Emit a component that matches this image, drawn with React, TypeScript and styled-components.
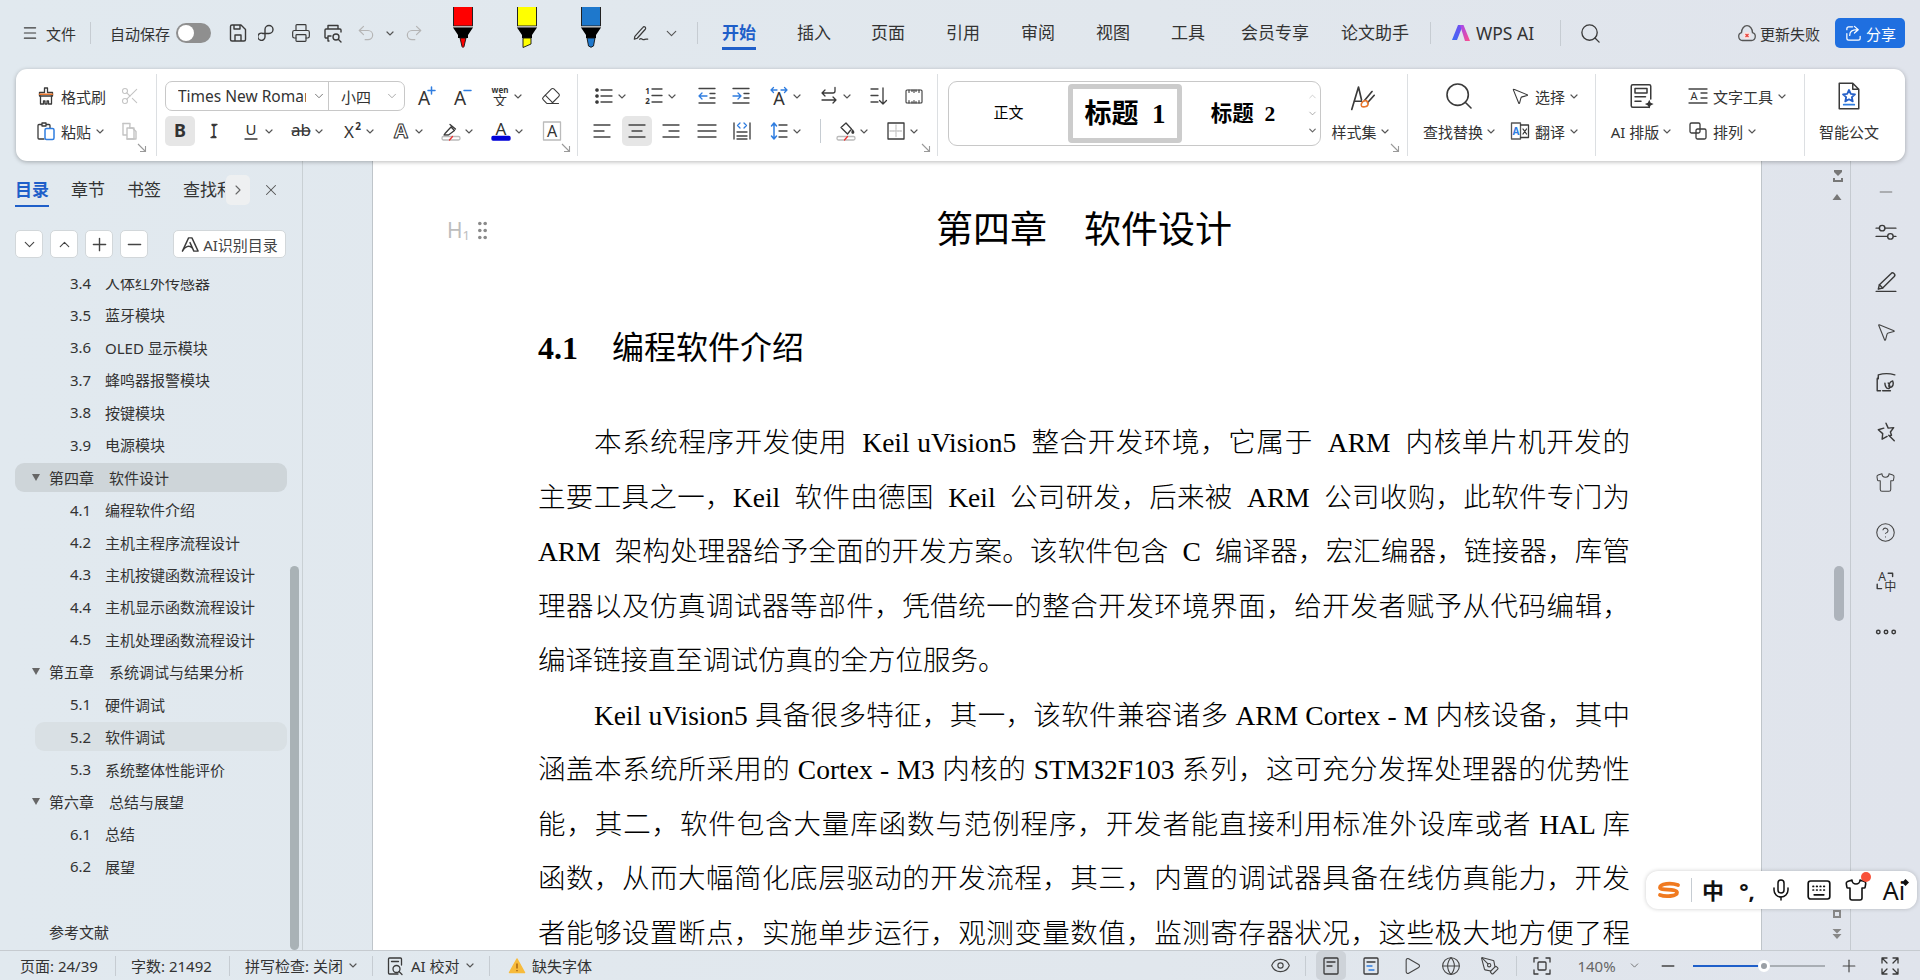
import React from 'react';
import styled, { createGlobalStyle } from 'styled-components';
import {
	Scissors, Search, X, Plus, Minus, ChevronDown, ChevronUp, ChevronRight, Eye, Play, Globe,
	Printer, Undo2, Redo2, CircleHelp, Shirt, MousePointer2, Mic, PenTool, Eraser,
} from 'lucide-react';

const SANS = `"Noto Sans", "Noto Sans CJK SC", sans-serif`;
const SERIF = `"Liberation Serif", "Noto Sans CJK SC", serif`;
const BLUE = '#1f5fc9';
const INK = '#333';

const GlobalStyle = createGlobalStyle`
	html, body { margin: 0; padding: 0; height: 100%; overflow: hidden; }
	body { font-family: ${SANS}; color: ${INK}; }
	#root { height: 100%; }
`;

const Shell = styled.div`
	position: relative;
	width: 1920px;
	height: 980px;
	display: flex;
	flex-direction: column;
	overflow: hidden;
	background: linear-gradient(90deg, #e1e9ef 0%, #e1e7ed 60%, #e0e4ec 100%);
`;

/* ---------- title bar ---------- */
const TitleBar = styled.div`
	height: 66px;
	padding-bottom: 3px;
	display: flex;
	align-items: center;
	font-size: 15px;
	flex-shrink: 0;
`;
const Slot = styled.div<{ $w: number }>`
	width: ${p => p.$w}px;
	flex-shrink: 0;
	display: flex;
	align-items: center;
	justify-content: center;
`;
const MenuButton = styled.div`
	display: flex;
	align-items: center;
	gap: 8px;
	padding-left: 22px;
	width: 90px;
	box-sizing: border-box;
	flex-shrink: 0;
`;
const VBar = styled.div<{ $h?: number; $ml?: number; $mr?: number }>`
	width: 1px;
	height: ${p => p.$h ?? 22}px;
	background: #c6ccd2;
	flex-shrink: 0;
	margin-left: ${p => p.$ml ?? 0}px;
	margin-right: ${p => p.$mr ?? 0}px;
`;
const AutoSave = styled.div`
	display: flex;
	align-items: center;
	gap: 6px;
	margin-left: 19px;
	width: 113px;
	flex-shrink: 0;
`;
const Toggle = styled.div`
	width: 35px;
	height: 20px;
	border-radius: 10px;
	background: #8f8f8f;
	position: relative;
	&::after {
		content: '';
		position: absolute;
		left: 2px;
		top: 2px;
		width: 16px;
		height: 16px;
		border-radius: 50%;
		background: #fff;
	}
`;
const PenSlot = styled(Slot)`
	margin-top: -11px;
`;
const Tab = styled.div<{ $w: number; $on?: boolean }>`
	position: relative;
	width: ${p => p.$w}px;
	flex-shrink: 0;
	font-size: 17px;
	line-height: 24px;
	color: ${p => (p.$on ? BLUE : INK)};
	font-weight: ${p => (p.$on ? 700 : 400)};
	&::after {
		content: '';
		display: ${p => (p.$on ? 'block' : 'none')};
		position: absolute;
		left: 0;
		top: 26px;
		width: 34px;
		height: 2.5px;
		background: ${BLUE};
	}
`;
const WpsAi = styled.div`
	display: flex;
	align-items: center;
	gap: 5px;
	margin-left: 20px;
	width: 109px;
	font-size: 17.5px;
	flex-shrink: 0;
`;
const Spacer = styled.div`
	flex: 1;
`;
const Failed = styled.div`
	display: flex;
	align-items: center;
	gap: 3px;
	margin-right: 15px;
`;
const Share = styled.div`
	width: 70px;
	height: 30px;
	margin-right: 15px;
	border-radius: 5px;
	background: #1f6fe0;
	color: #fff;
	display: flex;
	align-items: center;
	justify-content: center;
	gap: 3px;
`;

/* ---------- ribbon ---------- */
const Ribbon = styled.div`
	height: 92px;
	width: 1889px;
	margin-left: 16px;
	position: relative;
	z-index: 3;
	flex-shrink: 0;
	background: #fff;
	border-radius: 11px;
	box-shadow: 0 1px 4px rgba(0, 0, 0, 0.28);
	display: flex;
	align-items: center;
	font-size: 15px;
`;
const Group = styled.div<{ $w: number; $row?: boolean; $pad?: number; $plain?: boolean }>`
	position: relative;
	width: ${p => p.$w}px;
	height: 82px;
	box-sizing: border-box;
	flex-shrink: 0;
	padding-top: 7px;
	padding-left: ${p => p.$pad ?? 0}px;
	border-right: ${p => (p.$plain ? 'none' : '1px solid #dcdfe2')};
	display: flex;
	flex-direction: ${p => (p.$row ? 'row' : 'column')};
	gap: ${p => (p.$row ? 0 : 5)}px;
`;
const ToolRow = styled.div<{ $pad?: number }>`
	display: flex;
	align-items: center;
	height: 30px;
	padding-left: ${p => p.$pad ?? 0}px;
`;
const Tool = styled.div<{ $w?: number; $on?: boolean; $left?: boolean; $gap?: number }>`
	width: ${p => (p.$w ? `${p.$w}px` : 'auto')};
	height: 30px;
	flex-shrink: 0;
	display: flex;
	align-items: center;
	justify-content: ${p => (p.$left ? 'flex-start' : 'center')};
	gap: ${p => p.$gap ?? 4}px;
	border-radius: 5px;
	white-space: nowrap;
	background: ${p => (p.$on ? '#e6e6e6' : 'transparent')};
`;
const Corner = styled.div<{ $r: number }>`
	position: absolute;
	right: ${p => p.$r}px;
	bottom: 3px;
	line-height: 0;
`;
const Combo = styled.div`
	width: 240px;
	height: 30px;
	box-sizing: border-box;
	border: 1px solid #c8c8c8;
	border-radius: 7px;
	display: flex;
	flex-shrink: 0;
	align-items: center;
`;
const FontCell = styled.div`
	width: 163px;
	height: 100%;
	padding-left: 12px;
	box-sizing: border-box;
	border-right: 1px solid #c8c8c8;
	display: flex;
	align-items: center;
	gap: 6px;
`;
const FontName = styled.span`
	width: 128px;
	overflow: hidden;
	white-space: nowrap;
	font-size: 15.5px;
`;
const SizeCell = styled.div`
	flex: 1;
	padding-left: 12px;
	display: flex;
	align-items: center;
	gap: 14px;
`;
const Gallery = styled.div`
	width: 373px;
	height: 65px;
	box-sizing: border-box;
	border: 1px solid #c8c8c8;
	border-radius: 9px;
	display: flex;
	align-items: center;
	flex-shrink: 0;
`;
const StyleCell = styled.div<{ $w: number }>`
	width: ${p => p.$w}px;
	padding-bottom: 4px;
	text-align: center;
	flex-shrink: 0;
	color: #000;
`;
const StylePicked = styled.div`
	width: 114px;
	height: 59px;
	box-sizing: border-box;
	border: 5px solid #ccc;
	border-radius: 4px;
	padding-bottom: 4px;
	flex-shrink: 0;
	display: flex;
	align-items: center;
	justify-content: center;
	font: 700 27px ${SERIF};
	white-space: pre;
	color: #000;
`;
const StyleTwo = styled(StyleCell)`
	font: 700 21.5px ${SERIF};
	white-space: pre;
`;
const GalleryArrows = styled.div`
	flex: 1;
	height: 100%;
	display: flex;
	flex-direction: column;
	align-items: center;
	justify-content: space-around;
	padding: 6px 0;
	box-sizing: border-box;
`;
const Big = styled.div<{ $w: number }>`
	width: ${p => p.$w}px;
	flex-shrink: 0;
	display: flex;
	flex-direction: column;
	align-items: center;
	gap: 5px;
`;
const SideColumn = styled.div<{ $ml: number }>`
	margin-left: ${p => p.$ml}px;
	display: flex;
	flex-direction: column;
	gap: 5px;
`;

/* ---------- workspace ---------- */
const Workspace = styled.div`
	flex: 1;
	min-height: 0;
	display: flex;
`;
const Sidebar = styled.aside`
	position: relative;
	width: 303px;
	box-sizing: border-box;
	border-right: 1px solid #c9d0d4;
	flex-shrink: 0;
	display: flex;
	flex-direction: column;
	overflow: hidden;
`;
const SideTabs = styled.div`
	display: flex;
	align-items: flex-start;
	height: 46px;
	padding: 14px 0 0 15px;
	box-sizing: border-box;
	flex-shrink: 0;
`;
const SideTab = styled.div<{ $on?: boolean; $w?: number }>`
	position: relative;
	width: ${p => p.$w ?? 34}px;
	margin-right: 22px;
	font-size: 17px;
	line-height: 30px;
	white-space: nowrap;
	color: ${p => (p.$on ? BLUE : INK)};
	font-weight: ${p => (p.$on ? 700 : 400)};
	&::after {
		content: '';
		display: ${p => (p.$on ? 'block' : 'none')};
		position: absolute;
		left: 0;
		right: 0;
		top: 30px;
		height: 2px;
		background: ${BLUE};
	}
`;
const ClippedTab = styled(SideTab)`
	overflow: hidden;
	margin-right: 1px;
`;
const MoreTabs = styled.div`
	width: 24px;
	height: 30px;
	border-radius: 5px;
	background: #eef0f1;
	display: flex;
	align-items: center;
	justify-content: center;
	color: #666;
	margin-right: 12px;
`;
const CloseTab = styled.div`
	height: 30px;
	display: flex;
	align-items: center;
	color: #555;
`;
const SideTools = styled.div`
	display: flex;
	gap: 7px;
	padding: 23px 0 0 15px;
	height: 28px;
	flex-shrink: 0;
`;
const SquareButton = styled.div`
	width: 28px;
	height: 28px;
	box-sizing: border-box;
	border: 1px solid #d2d7da;
	border-radius: 5px;
	background: #fff;
	display: flex;
	align-items: center;
	justify-content: center;
	color: #444;
`;
const AiButton = styled(SquareButton)`
	width: 113px;
	margin-left: 18px;
	gap: 3px;
	font-size: 15px;
	white-space: nowrap;
`;
const Tree = styled.div`
	margin-top: 21px;
	flex: 1;
	min-height: 0;
	overflow: hidden;
	padding-left: 15px;
`;
const TreeInner = styled.div`
	margin-top: -11px;
`;
const TreeRow = styled.div<{ $sub?: boolean; $bg?: string }>`
	height: 29px;
	margin-bottom: 3.44px;
	width: ${p => (p.$sub ? 252 : 272)}px;
	margin-left: ${p => (p.$sub ? 20 : 0)}px;
	padding-left: ${p => (p.$sub ? 35 : 34)}px;
	box-sizing: border-box;
	display: flex;
	align-items: center;
	font-size: 15px;
	white-space: pre;
	border-radius: 9px;
	position: relative;
	background: ${p => p.$bg ?? 'transparent'};
`;
const TreeNum = styled.span`
	width: 35px;
	flex-shrink: 0;
`;
const TreeArrow = styled.span`
	position: absolute;
	left: 17px;
	top: 11px;
	width: 0;
	height: 0;
	border-left: 4.5px solid transparent;
	border-right: 4.5px solid transparent;
	border-top: 7px solid #666;
`;
const ChapterPart = styled.span`
	width: 60px;
	flex-shrink: 0;
`;
const SideThumb = styled.div`
	position: absolute;
	left: 290px;
	top: 405px;
	bottom: 0;
	width: 9px;
	border-radius: 5px;
	background: #a9b2b6;
`;
const Gap = styled.div`
	width: 69px;
	flex-shrink: 0;
`;
const Page = styled.main`
	position: relative;
	width: 1390px;
	box-sizing: border-box;
	flex-shrink: 0;
	padding: 0 131px 0 165px;
	background: #fff;
	border-left: 1px solid #bfc5ca;
	border-right: 1px solid #bfc5ca;
	overflow: hidden;
	font-family: ${SERIF};
	font-weight: 300;
	color: #000;
`;
const Handle = styled.div`
	position: absolute;
	left: 74px;
	top: 58px;
	display: flex;
	align-items: center;
	gap: 8px;
	color: #bdbdbd;
	font: 21px ${SANS};
	line-height: 22px;
	sub {
		font-size: 13px;
		vertical-align: -2px;
		line-height: 0;
	}
`;
const DocTitle = styled.h1`
	margin: 47px 0 0;
	font-size: 37px;
	line-height: 46px;
	font-weight: 400;
	text-align: center;
	white-space: pre;
`;
const DocHeading = styled.h2`
	margin: 74px 0 48px;
	font-size: 32px;
	line-height: 40px;
	font-weight: 400;
	display: flex;
	gap: 34px;
	b {
		font-weight: 700;
	}
`;
const DocLine = styled.div<{ $first?: boolean; $end?: boolean }>`
	height: 54.5px;
	line-height: 54.5px;
	font-size: 27.5px;
	text-indent: ${p => (p.$first ? 56 : 0)}px;
	text-align: ${p => (p.$end ? 'left' : 'justify')};
	text-align-last: ${p => (p.$end ? 'left' : 'justify')};
	text-justify: inter-character;
`;
const Gutter = styled.div`
	position: relative;
	width: 88px;
	flex-shrink: 0;
	border-right: 1px solid #c5cad0;
`;
const GutterMark = styled.div<{ $top: number }>`
	position: absolute;
	left: 70px;
	top: ${p => p.$top}px;
	line-height: 0;
`;
const DocThumb = styled.div`
	position: absolute;
	left: 72px;
	top: 405px;
	width: 10px;
	height: 55px;
	border-radius: 5px;
	background: #adb3bb;
`;
const Rail = styled.div`
	flex: 1;
	padding-top: 16px;
	display: flex;
	flex-direction: column;
	align-items: center;
`;
const RailItem = styled.div`
	height: 50px;
	display: flex;
	align-items: center;
	justify-content: center;
	color: #444;
	&:first-child {
		height: 30px;
	}
`;

/* ---------- status bar ---------- */
const StatusBar = styled.footer`
	height: 30px;
	box-sizing: border-box;
	flex-shrink: 0;
	border-top: 1px solid #c6cbd0;
	display: flex;
	align-items: center;
	font-size: 15px;
	padding: 0 13px 0 20px;
	white-space: nowrap;
`;
const Seg = styled.div<{ $w: number; $pad?: number }>`
	width: ${p => p.$w}px;
	padding-left: ${p => p.$pad ?? 0}px;
	box-sizing: border-box;
	display: flex;
	align-items: center;
	gap: 6px;
	flex-shrink: 0;
`;
const StatusButton = styled.div<{ $w: number; $on?: boolean; $ml?: number }>`
	width: ${p => p.$w}px;
	height: 29px;
	margin-left: ${p => p.$ml ?? 0}px;
	flex-shrink: 0;
	display: flex;
	align-items: center;
	justify-content: center;
	border-radius: 5px;
	color: #444;
	background: ${p => (p.$on ? '#ced3d9' : 'transparent')};
`;
const Percent = styled(StatusButton)`
	color: #666;
	font-size: 15px;
`;
const Slider = styled.div`
	position: relative;
	width: 132px;
	margin-left: 9px;
	height: 2px;
	background: #a9aeb4;
	flex-shrink: 0;
`;
const SliderFill = styled.div<{ $value: number }>`
	width: ${p => p.$value}%;
	height: 100%;
	background: ${BLUE};
`;
const SliderThumb = styled.div<{ $value: number }>`
	position: absolute;
	left: ${p => p.$value}%;
	top: -5px;
	margin-left: -6px;
	width: 12px;
	height: 12px;
	box-sizing: border-box;
	border-radius: 50%;
	background: #9a9fa5;
	border: 3px solid #fff;
`;

/* ---------- input method float ---------- */
const ImeBar = styled.div`
	position: absolute;
	right: 3px;
	top: 871px;
	width: 271px;
	height: 38px;
	box-sizing: border-box;
	z-index: 4;
	border-radius: 12px;
	background: #fff;
	box-shadow: 0 0 4px rgba(0, 0, 0, 0.2);
	display: flex;
	align-items: center;
	padding-left: 10px;
	color: #111;
`;
const ImeCell = styled.div<{ $w: number }>`
	position: relative;
	width: ${p => p.$w}px;
	flex-shrink: 0;
	display: flex;
	align-items: center;
	justify-content: center;
	font-size: 22px;
	font-weight: 700;
	line-height: 24px;
`;
const ImeDot = styled.span`
	position: absolute;
	right: 4px;
	top: -6px;
	width: 10px;
	height: 10px;
	border-radius: 50%;
	background: #f8513a;
`;
const AiMark = styled.span`
	font-size: 25px;
	font-weight: 400;
	position: relative;
	&::after {
		content: '';
		position: absolute;
		right: -3px;
		top: 2px;
		width: 5px;
		height: 5px;
		background: #111;
		transform: rotate(45deg);
	}
`;

/* ---------- drawings ---------- */
const Ico: React.FC<{ s?: number; c?: string; w?: number; children: React.ReactNode }> = ({ s = 20, c = '#3a3a3a', w = 1.3, children }) => (
	<svg width={s} height={s} viewBox="0 0 20 20" fill="none" stroke={c} strokeWidth={w} strokeLinecap="round" strokeLinejoin="round">
		{children}
	</svg>
);
const Letter: React.FC<{ x?: number; y?: number; size?: number; fill?: string; children: React.ReactNode; weight?: number }> = ({ x = 10, y = 16, size = 19, fill = '#333', weight = 400, children }) => (
	<text x={x} y={y} fontSize={size} fontWeight={weight} fontFamily={SANS} fill={fill} stroke="none" textAnchor="middle">
		{children}
	</text>
);
const Caret = () => (
	<svg width="8" height="5" viewBox="0 0 8 5" fill="none" stroke="#555" strokeWidth="1.2" strokeLinecap="round">
		<path d="M1 1l3 3 3-3" />
	</svg>
);
const CornerArrow = () => (
	<svg width="10" height="10" viewBox="0 0 10 10" fill="none" stroke="#9a9a9a" strokeWidth="1.1">
		<path d="M1 1l7 7M3 8.5h5.5V3" />
	</svg>
);
const Lines: React.FC<{ rows: number[][]; c?: string }> = ({ rows, c = '#444' }) => (
	<>
		{rows.map(([a, b, y]) => (
			<path key={`${a}-${y}`} d={`M${a} ${y}H${b}`} stroke={c} />
		))}
	</>
);

const Menu = () => <Ico s={16} w={1.5}><path d="M3 3.5h14M3 10h14M3 16.5h14" /></Ico>;
const Save = () => <Ico w={1.4}><path d="M2.5 3.5a1.5 1.5 0 0 1 1.5-1.5h9l4.5 4.5V16.5a1.5 1.5 0 0 1-1.5 1.5H4a1.5 1.5 0 0 1-1.5-1.5zM6 2v4h6V2M7 18v-6h6v6" /></Ico>;
const PLink = () => <Ico w={1.4}><path d="M7 14V6.5a4 4 0 1 1 4 4H5a3.6 3.6 0 1 0 2 3.5" /></Ico>;
const PreviewPrint = () => <Ico w={1.4}><path d="M5 6V2.5h10V6M4 15H3a1 1 0 0 1-1-1V7a1 1 0 0 1 1-1h14a1 1 0 0 1 1 1v2M6 18H5v-5h3" /><circle cx="13" cy="14" r="3" /><path d="M15.5 16.5L18 19" /></Ico>;
const Pen: React.FC<{ color: string; tip: string }> = ({ color, tip }) => (
	<svg width="20" height="41" viewBox="0 0 20 41">
		<path d="M.5 0V19H19.5V0" fill={color} stroke="#222" />
		<rect y="19" width="20" height="1.6" fill="#b5b5b5" />
		<path d="M0 20.6H20L15 28V31H5V28Z" fill="#000" />
		<path d={tip} fill={color} stroke="#111" strokeWidth=".9" />
	</svg>
);
const Signature = () => <Ico s={19}><path d="M3 13l8.5-9.5a1.6 1.6 0 0 1 2.5 2L5.5 15l-3 1zM8 16c2-2 3 1 4.5.5s1.5-1 4-.5" /></Ico>;
const WpsLogo = () => (
	<svg width="20" height="18" viewBox="0 0 20 18">
		<defs>
			<linearGradient id="wpsa" x1="0" y1="1" x2="1" y2="0"><stop offset="0" stopColor="#3a6cf5" /><stop offset="1" stopColor="#7a4cf0" /></linearGradient>
			<linearGradient id="wpsb" x1="0" y1="0" x2="1" y2="1"><stop offset="0" stopColor="#a04af0" /><stop offset="1" stopColor="#ff4f8b" /></linearGradient>
		</defs>
		<path d="M7 1h5L6 16H1z" fill="url(#wpsa)" />
		<path d="M9 1h3.5L19 17h-5z" fill="url(#wpsb)" />
	</svg>
);
const CloudFail = () => (
	<svg width="20" height="20" viewBox="0 0 20 20" fill="none">
		<path d="M5.5 17.5a4 4 0 0 1-1-7.800 5.500 7 0 0 1 11 0 4 4 0 0 1-1 7.800z" stroke="#555" strokeWidth="1.3" />
		<circle cx="10" cy="12.500" r="3.600" fill="#fbe3e1" />
		<path d="M8.500 11l3 3M11.500 11l-3 3" stroke="#e8423c" strokeWidth="1.300" />
	</svg>
);
const ShareGlyph = () => <Ico s={19} c="#fff"><path d="M9 3H5a2 2 0 0 0-2 2v1M3 10v5a2 2 0 0 0 2 2h10a2 2 0 0 0 2-2v-2M6 12c0-4 3-6 8-6M11 2.5L15 6l-4 3.5" /></Ico>;

const Brush = () => (
	<Ico>
		<path d="M8.5 2h3v4.5h5V10H3.5V6.5h5z" />
		<path d="M3.5 8.3h13" stroke="#e8752c" strokeWidth="1.6" />
		<path d="M4.5 10v8h3v-3h1.5v3h2v-3h1.5v3h3v-8" />
	</Ico>
);
const Paste = () => (
	<Ico>
		<path d="M6 3.5H3a1 1 0 0 0-1 1V17a1 1 0 0 0 1 1h5M14 7V4.5a1 1 0 0 0-1-1h-3M6 2h4v3H6z" />
		<rect x="9" y="7.5" width="9" height="11" rx="1.5" stroke="#2f7de0" strokeWidth="1.5" />
	</Ico>
);
const CopyGray = () => (
	<Ico c="#c4c4c4" w={1.4}>
		<path d="M3 2.5h7l-.2 4.5H14V18H7" />
		<path d="M3 2.5V14h4M7 7h5.5l3.5 3.5V18H7z" />
	</Ico>
);
const BulletList = () => <Ico><circle cx="3" cy="4" r="1.2" fill="#333" /><circle cx="3" cy="10" r="1.2" fill="#333" /><circle cx="3" cy="16" r="1.2" fill="#333" /><Lines rows={[[7, 18, 4], [7, 18, 10], [7, 18, 16]]} /></Ico>;
const NumberList = () => <Ico><Letter x={3.5} y={7.5} size={8} weight={700}>1</Letter><Letter x={3.5} y={18} size={8} weight={700}>2</Letter><Lines rows={[[8, 18, 3], [8, 18, 9.5], [8, 18, 16]]} /></Ico>;
const Outdent = () => <Ico><Lines rows={[[2, 18, 2.5], [2, 18, 17]]} /><Lines rows={[[13, 18, 7.5], [13, 18, 12]]} /><path d="M10 10H2M5 7L2 10l3 3" stroke="#2f7de0" /></Ico>;
const Indent = () => <Ico><Lines rows={[[2, 18, 2.5], [2, 18, 17]]} /><Lines rows={[[13, 18, 7.5], [13, 18, 12]]} /><path d="M2 10h8M7 7l3 3-3 3" stroke="#2f7de0" /></Ico>;
const SpreadA = () => <Ico><Letter y={19} size={18}>A</Letter><path d="M2 4h6M4.5 1.5L2 4l2.5 2.5M12 4h6M15.5 1.5L18 4l-2.5 2.5" stroke="#2f7de0" /></Ico>;
const Wrap = () => <Ico><path d="M16 1.5V5a2 2 0 0 1-2 2H3M6 4L3 7l3 3M3 14h14M14 11l3 3-3 3" /></Ico>;
const SortDown = () => <Ico><Lines rows={[[2, 9, 3], [2, 9, 9.5], [2, 9, 16]]} /><path d="M14 2v16M10.5 14.5L14 18l3.5-3.5" /></Ico>;
const Ruler = () => <Ico w={1.1}><rect x="2" y="4" width="16" height="13" rx="1" /><path d="M5 4v2.500M8 4v1.500M10 4v2.500M12 4v1.500M15 4v2.500M5 17v-2.500M8 17v-1.500M10 17v-2.500M12 17v-1.500M15 17v-2.500" /></Ico>;
const AlignLeft = () => <Ico><Lines rows={[[2, 18, 4], [2, 12, 10], [2, 18, 16]]} /></Ico>;
const AlignCenter = () => <Ico><Lines rows={[[2, 18, 4], [5, 15, 10], [2, 18, 16]]} /></Ico>;
const AlignRight = () => <Ico><Lines rows={[[2, 18, 4], [8, 18, 10], [2, 18, 16]]} /></Ico>;
const AlignJustify = () => <Ico><Lines rows={[[1, 19, 4], [1, 19, 10], [1, 19, 16]]} /></Ico>;
const Distribute = () => <Ico><path d="M2 2v16M18 2v16" /><Lines rows={[[5, 15, 11], [5, 15, 15], [5, 15, 18]]} /><path d="M8 2L5.5 4.5 8 7M12 2l2.5 2.5L12 7" stroke="#2f7de0" /></Ico>;
const LineSpacing = () => <Ico><path d="M5 2v16M2.5 5L5 2l2.5 3M2.5 15L5 18l2.5-3" stroke="#2f7de0" strokeWidth="1.5" /><Lines rows={[[10, 18, 4], [10, 18, 10], [10, 18, 16]]} /></Ico>;
const FillBucket = () => <Ico><path d="M5 6.5L10 2l5.5 6-4 5z" /><path d="M16.5 9c1 1.3 1.5 2 1 2.8s-1.5.2-1.5-.6z" fill="#333" /><rect x="1" y="15.5" width="18" height="3.5" rx="1.5" stroke="#bbb" /><path d="M8.5 19l3-3.5" stroke="#e33" /></Ico>;
const Borders = () => <Ico><rect x="2" y="2" width="16" height="16" /><path d="M10 4v12M4 10h12" stroke="#c8c8c8" strokeDasharray="1.5 1" /></Ico>;
const Highlighter = () => <Ico><path d="M4 12.5L10 6l3.5 3.5L7.5 14H3zM9 3.5l5.5 4.5M2 13.5" /><rect x="1" y="15.5" width="18" height="3.5" rx="1.5" stroke="#bbb" /><path d="M8.5 19l3-3.5" stroke="#e33" /></Ico>;
const StyleSet = () => <Ico s={30} w={1.1}><path d="M4.500 19L9 4l2 8.500M6 13.500h5" /><path d="M13 13l5-6M15 14.500l4.500-5" /><path d="M11 15c1-2 3-2.500 4-1.200s.3 3.200-1.700 3.400-3-.3-2.300-2.200z" stroke="#e8752c" /></Ico>;
const Translate = () => <Ico><rect x="1.5" y="2" width="9" height="16" stroke="#555" /><path d="M10.5 4h8v12.5h-8M13 8l3.5 5M16.5 8L13 13" /><Letter x={6} y={14} size={10} fill="#2f7de0" weight={700}>A</Letter></Ico>;
const AiDoc = () => <Ico s={30} w={1}><path d="M15.5 17.5H4.5a1 1 0 0 1-1-1v-13a1 1 0 0 1 1-1h11a1 1 0 0 1 1 1v8.5" /><rect x="6" y="5" width="8" height="3" /><path d="M6 10.5h7M6 13.5h4" /><path d="M15.5 12.5l.9 2 2 .9-2 .9-.9 2-.9-2-2-.9 2-.9z" fill="#333" stroke="none" /></Ico>;
const TextTool = () => <Ico><Lines rows={[[1, 19, 3], [1, 19, 17]]} /><Letter x={6} y={14} size={11}>A</Letter><Lines rows={[[13, 19, 7], [13, 19, 12]]} /></Ico>;
const Arrange = () => <Ico><rect x="2" y="2" width="10" height="10" rx="1.5" /><rect x="8" y="8" width="10" height="10" rx="1.5" /></Ico>;
const SmartDoc = () => (
	<Ico s={30} w={1}>
		<path d="M3.5 1.5h9l4 4v13h-13zM12.5 1.5v4h4" />
		<path d="M10 6l1.2 2.6 2.8.3-2.1 1.9.6 2.8L10 12.2 7.5 13.600l.6-2.800-2.100-1.900 2.800-.300z" fill="#fff" stroke="#2560c8" strokeWidth="1.2" />
		<path d="M6.500 15.800h7" stroke="#2f7de0" strokeWidth="1.200" />
	</Ico>
);
const AiOutline = () => <Ico s={19} w={1.5}><path d="M1.500 17L8 3h3.500L18 17h-4.500L9.500 8M1.500 17c2.500-5 7-6.500 10-3.500" /></Ico>;
const DragDots = () => (
	<svg width="9" height="19" viewBox="0 0 9 19" fill="#8a8a8a">
		{[2.5, 9.5, 16.5].flatMap(y => [1.800, 7.200].map(x => <circle key={`${x}-${y}`} cx={x} cy={y} r="1.800" />))}
	</svg>
);
const Knobs = () => <Ico s={22}><path d="M1 6.500h18M1 14h18" /><circle cx="6.500" cy="6.500" r="2.500" fill="#e0e4ec" /><circle cx="14" cy="14" r="2.500" fill="#e0e4ec" /></Ico>;
const Marker = () => <Ico s={22}><path d="M1 18.500h18M3 16.500l1-4L14.500 2.500a1.800 1.800 0 0 1 3 2.500L7 15.500z" /><path d="M4 12.500l3 3" /></Ico>;
const ImageLeaf = () => <Ico s={22}><path d="M3 7V3.500c5-1.500 10-1.500 15 0M3 6a1 1 0 0 0-1 1v11h3M14 18H7" /><path d="M9 11c0 2 1 5 3 5s2-3 0-5M13 15c-1-2 0-5 3-6 1 2 1 6-3 6z" /></Ico>;
const StarArrow = () => <Ico s={22}><path d="M10 2l2 4.500 5-.500-3 4 1 3-1.500.300M11 14l-4.500 2.500.5-5L3 8l5-1.500" /><path d="M12.500 13l5 5" /></Ico>;
const TranslateRail = () => <Ico s={22}><Letter x={6.500} y={9.500} size={11}>A</Letter><path d="M12 2h4v3M2 12v4h4" /><Letter x={14} y={18.500} size={11}>中</Letter></Ico>;
const Dots3 = () => <Ico s={22}><circle cx="3" cy="10" r="1.600" /><circle cx="10" cy="10" r="1.600" /><circle cx="17" cy="10" r="1.600" /></Ico>;
const TriUp = () => <svg width="10" height="8" viewBox="0 0 10 8" fill="#777"><path d="M5 1l4.500 6H.5z" /></svg>;
const TopMark = () => <svg width="12" height="12" viewBox="0 0 12 12" fill="#777"><path d="M2 0h8v2L6 6 2 2z" /><path d="M1 8h2v2h6V8h2v4H1z" /></svg>;
const SquareMark = () => <svg width="10" height="10" viewBox="0 0 10 10" fill="none" stroke="#888" strokeWidth="2"><rect x="2" y="2" width="6" height="6" /></svg>;
const DownDouble = () => <svg width="10" height="10" viewBox="0 0 10 10" fill="#888"><path d="M.5 0h9L5 4.500zM.5 5h9L5 10z" /></svg>;
const Sogou = () => (
	<svg width="28" height="20" viewBox="0 0 26 18" fill="none" stroke="#f07a20" strokeWidth="3.800" strokeLinecap="round">
		<path d="M22 4C15 1.500 4 2.500 4 6.500 4 10 21 7 21 11.500 21 15.500 9 16 4 14" />
	</svg>
);
const Keyboard = () => <Ico s={24} c="#111" w={1.4}><rect x="1" y="2.500" width="18" height="15" rx="2" /><path d="M5 7h.5M8 7h.5M11 7h.5M14 7h.5M5 10h.5M8 10h.5M11 10h.5M14 10h.5M6 14h8" /></Ico>;
const PageView = () => <Ico><rect x="3" y="2" width="14" height="16" rx="1" /><path d="M6 6h8M6 10h5" /></Ico>;
const OutlineView = () => <Ico><rect x="3" y="2" width="14" height="16" rx="1" /><path d="M6 6h8" /><path d="M6 10h5M8 14h5" stroke="#2f7de0" /></Ico>;
const FitPage = () => <Ico><path d="M2 6V2h4M14 2h4v4M18 14v4h-4M6 18H2v-4" /><rect x="6" y="6" width="8" height="8" rx="1" /></Ico>;
const Fullscreen = () => <Ico><path d="M2 7V2h5M13 2h5v5M18 13v5h-5M7 18H2v-5M2 2l5 5M18 2l-5 5M18 18l-5-5M2 18l5-5" /></Ico>;
const AiCheck = () => <Ico><path d="M13 18H4.500a1 1 0 0 1-1-1V3a1 1 0 0 1 1-1h11a1 1 0 0 1 1 1v6M6.500 5.500h7" /><circle cx="11.500" cy="13" r="3.500" /><path d="M14 15.500l3 3" /></Ico>;
const Warn = () => (
	<svg width="18" height="18" viewBox="0 0 18 18">
		<path d="M9 2l7.500 13.500h-15z" fill="#f7bb3c" stroke="#f7bb3c" strokeWidth="1.500" strokeLinejoin="round" />
		<path d="M9 6.500v5M9 13v1.200" stroke="#a5600c" strokeWidth="1.400" />
	</svg>
);

const IconA: React.FC<{ mark: 'plus' | 'minus' }> = ({ mark }) => (
	<Ico>
		<Letter x={8} y={19} size={19}>A</Letter>
		{mark === 'plus' ? <path d="M12 4.500h7M15.500 1v7" stroke="#2f7de0" strokeWidth="1.500" /> : <path d="M12 4.500h7" stroke="#2f7de0" strokeWidth="1.500" />}
	</Ico>
);
const WenGlyph = () => (
	<Ico>
		<Letter y={6.500} size={8} weight={700}>wen</Letter>
		<Letter y={19.500} size={14}>文</Letter>
	</Ico>
);
const ColorA = () => (
	<Ico>
		<Letter y={14} size={17}>A</Letter>
		<rect x="1" y="15.500" width="18" height="3.500" rx="1" fill="#0000d8" stroke="#0000d8" />
	</Ico>
);
const BoxedA = () => (
	<Ico c="#bbb">
		<rect x="1.500" y="1" width="17" height="18" />
		<Letter y={16} size={16}>A</Letter>
	</Ico>
);
const OutlineA = () => (
	<Ico>
		<text x="10" y="17" fontSize="20" fontWeight="700" fontFamily={SANS} fill="#fff" stroke="#333" strokeWidth="1" textAnchor="middle">A</text>
	</Ico>
);

/* ---------- data ---------- */
const tabs = [
	{ t: '开始', w: 75, on: true }, { t: '插入', w: 74 }, { t: '页面', w: 75 }, { t: '引用', w: 75 }, { t: '审阅', w: 75 },
	{ t: '视图', w: 75 }, { t: '工具', w: 70 }, { t: '会员专享', w: 100 }, { t: '论文助手', w: 89 },
];

type TocRow = { num?: string; title: string; ch?: string; open?: boolean; bg?: string };
const toc: TocRow[] = [
	{ num: '3.4', title: '人体红外传感器' },
	{ num: '3.5', title: '蓝牙模块' },
	{ num: '3.6', title: 'OLED 显示模块' },
	{ num: '3.7', title: '蜂鸣器报警模块' },
	{ num: '3.8', title: '按键模块' },
	{ num: '3.9', title: '电源模块' },
	{ ch: '第四章', title: '软件设计', open: true, bg: '#ced5d9' },
	{ num: '4.1', title: '编程软件介绍' },
	{ num: '4.2', title: '主机主程序流程设计' },
	{ num: '4.3', title: '主机按键函数流程设计' },
	{ num: '4.4', title: '主机显示函数流程设计' },
	{ num: '4.5', title: '主机处理函数流程设计' },
	{ ch: '第五章', title: '系统调试与结果分析', open: true },
	{ num: '5.1', title: '硬件调试' },
	{ num: '5.2', title: '软件调试', bg: '#d9e0e4' },
	{ num: '5.3', title: '系统整体性能评价' },
	{ ch: '第六章', title: '总结与展望', open: true },
	{ num: '6.1', title: '总结' },
	{ num: '6.2', title: '展望' },
	{ title: '' },
	{ ch: '参考文献', title: '' },
];

// the wider gaps around latin words in the first paragraph are two spaces in the document
const paragraphs = [
	[
		'本系统程序开发使用\u00a0 Keil uVision5\u00a0 整合开发环境，它属于\u00a0 ARM\u00a0 内核单片机开发的',
		'主要工具之一，Keil\u00a0 软件由德国\u00a0 Keil\u00a0 公司研发，后来被\u00a0 ARM\u00a0 公司收购，此软件专门为',
		'ARM\u00a0 架构处理器给予全面的开发方案。该软件包含\u00a0 C\u00a0 编译器，宏汇编器，链接器，库管',
		'理器以及仿真调试器等部件，凭借统一的整合开发环境界面，给开发者赋予从代码编辑，',
		'编译链接直至调试仿真的全方位服务。',
	],
	[
		'Keil uVision5 具备很多特征，其一，该软件兼容诸多 ARM Cortex - M 内核设备，其中',
		'涵盖本系统所采用的 Cortex - M3 内核的 STM32F103 系列，这可充分发挥处理器的优势性',
		'能，其二，软件包含大量库函数与范例程序，开发者能直接利用标准外设库或者 HAL 库',
		'函数，从而大幅简化底层驱动的开发流程，其三，内置的调试器具备在线仿真能力，开发',
		'者能够设置断点，实施单步运行，观测变量数值，监测寄存器状况，这些极大地方便了程',
	],
];

export default function App() {
	return (
		<Shell lang="zh-CN">
			<GlobalStyle />
			<TitleBar>
				<MenuButton><Menu />文件</MenuButton>
				<VBar />
				<AutoSave>自动保存<Toggle /></AutoSave>
				<Slot $w={29}><Save /></Slot>
				<Slot $w={32}><PLink /></Slot>
				<Slot $w={33}><Printer size={20} strokeWidth={1.4} color="#3a3a3a" /></Slot>
				<Slot $w={32}><PreviewPrint /></Slot>
				<Slot $w={34}><Undo2 size={20} strokeWidth={1.4} color="#b5b5b5" /></Slot>
				<Slot $w={14}><Caret /></Slot>
				<Slot $w={34}><Redo2 size={20} strokeWidth={1.4} color="#b5b5b5" /></Slot>
				<PenSlot $w={64}><Pen color="#ff0000" tip="M7 31H13L11 39.500Q10 41.500 9 39.500Z" /></PenSlot>
				<PenSlot $w={64}><Pen color="#ffff00" tip="M6 31H14V37L6 40.500Z" /></PenSlot>
				<PenSlot $w={64}><Pen color="#1e78cc" tip="M6 31H14L12.500 39Q10 41.500 7.500 39Z" /></PenSlot>
				<Slot $w={36}><Signature /></Slot>
				<Slot $w={24}><ChevronDown size={17} strokeWidth={1.6} color="#555" /></Slot>
				<Slot $w={14} />
				<VBar $mr={24} />
				{tabs.map(tab => (
					<Tab key={tab.t} $w={tab.w} $on={tab.on}>{tab.t}</Tab>
				))}
				<VBar />
				<WpsAi><WpsLogo />WPS AI</WpsAi>
				<VBar $h={26} />
				<Slot $w={58}><Search size={23} strokeWidth={1.4} color="#3a3a3a" /></Slot>
				<Spacer />
				<Failed><CloudFail />更新失败</Failed>
				<Share><ShareGlyph />分享</Share>
			</TitleBar>

			<Ribbon>
				<Group $w={141}>
					<ToolRow $pad={20}>
						<Tool $w={80} $left $gap={5}><Brush />格式刷</Tool>
						<Tool $w={28}><Scissors size={20} strokeWidth={1.3} color="#c4c4c4" /></Tool>
					</ToolRow>
					<ToolRow $pad={20}>
						<Tool $w={80} $left $gap={5}><Paste />粘贴<Caret /></Tool>
						<Tool $w={28}><CopyGray /></Tool>
					</ToolRow>
					<Corner $r={9}><CornerArrow /></Corner>
				</Group>

				<Group $w={421}>
					<ToolRow $pad={8}>
						<Combo>
							<FontCell><FontName>Times New Roman</FontName><ChevronDown size={14} strokeWidth={1.5} color="#666" /></FontCell>
							<SizeCell>小四<ChevronDown size={14} strokeWidth={1.2} color="#888" /></SizeCell>
						</Combo>
						<Tool $w={42}><IconA mark="plus" /></Tool>
						<Tool $w={30}><IconA mark="minus" /></Tool>
						<Tool $w={58}><WenGlyph /><Caret /></Tool>
						<Tool $w={32}><Eraser size={20} strokeWidth={1.3} color="#3a3a3a" /></Tool>
					</ToolRow>
					<ToolRow $pad={8}>
						<Tool $w={30} $on><Ico><Letter y={16} size={18} weight={700}>B</Letter></Ico></Tool>
						<Tool $w={38}><Ico><Letter y={16} size={17}>I</Letter><path d="M8 3.500h5M7 16.500h5" /></Ico></Tool>
						<Tool $w={48}><Ico><Letter y={14} size={15}>U</Letter><path d="M4 18h12" /></Ico><Caret /></Tool>
						<Tool $w={52}><Ico><Letter y={15} size={17}>ab</Letter><path d="M1 10h18" /></Ico><Caret /></Tool>
						<Tool $w={50}><Ico><Letter x={7} y={17} size={17}>X</Letter><Letter x={16} y={9} size={10} weight={700}>2</Letter></Ico><Caret /></Tool>
						<Tool $w={48}><OutlineA /><Caret /></Tool>
						<Tool $w={52}><Highlighter /><Caret /></Tool>
						<Tool $w={48}><ColorA /><Caret /></Tool>
						<Tool $w={42}><BoxedA /></Tool>
					</ToolRow>
					<Corner $r={6}><CornerArrow /></Corner>
				</Group>

				<Group $w={360}>
					<ToolRow $pad={12}>
						<Tool $w={40}><BulletList /><Caret /></Tool>
						<Tool $w={60}><NumberList /><Caret /></Tool>
						<Tool $w={34}><Outdent /></Tool>
						<Tool $w={34}><Indent /></Tool>
						<Tool $w={54}><SpreadA /><Caret /></Tool>
						<Tool $w={46}><Wrap /><Caret /></Tool>
						<Tool $w={42}><SortDown /></Tool>
						<Tool $w={28}><Ruler /></Tool>
					</ToolRow>
					<ToolRow $pad={9}>
						<Tool $w={30}><AlignLeft /></Tool>
						<Tool $w={5} />
						<Tool $w={30} $on><AlignCenter /></Tool>
						<Tool $w={38}><AlignRight /></Tool>
						<Tool $w={34}><AlignJustify /></Tool>
						<Tool $w={36}><Distribute /></Tool>
						<Tool $w={50}><LineSpacing /><Caret /></Tool>
						<VBar $h={24} $ml={10} />
						<Tool $w={62}><FillBucket /><Caret /></Tool>
						<Tool $w={38}><Borders /><Caret /></Tool>
					</ToolRow>
					<Corner $r={6}><CornerArrow /></Corner>
				</Group>

				<Group $w={470} $row $pad={10}>
					<Gallery>
						<StyleCell $w={119}>正文</StyleCell>
						<StylePicked>标题  1</StylePicked>
						<StyleTwo $w={122}>标题  2</StyleTwo>
						<GalleryArrows>
							<ChevronUp size={11} strokeWidth={1.5} color="#bbb" />
							<ChevronDown size={11} strokeWidth={1.5} color="#888" />
							<ChevronDown size={11} strokeWidth={2.5} color="#666" />
						</GalleryArrows>
					</Gallery>
					<Big $w={78}>
						<Tool><StyleSet /></Tool>
						<Tool>样式集<Caret /></Tool>
					</Big>
					<Corner $r={7}><CornerArrow /></Corner>
				</Group>

				<Group $w={188} $row $pad={13}>
					<Big $w={76}>
						<Tool><Search size={32} strokeWidth={1.2} color="#3a3a3a" /></Tool>
						<Tool>查找替换<Caret /></Tool>
					</Big>
					<SideColumn $ml={13}>
						<Tool $left $gap={5}><MousePointer2 size={20} strokeWidth={1.3} color="#3a3a3a" />选择<Caret /></Tool>
						<Tool $left $gap={5}><Translate />翻译<Caret /></Tool>
					</SideColumn>
				</Group>

				<Group $w={209} $row $pad={9}>
					<Big $w={72}>
						<Tool><AiDoc /></Tool>
						<Tool>AI 排版<Caret /></Tool>
					</Big>
					<SideColumn $ml={11}>
						<Tool $left $gap={5}><TextTool />文字工具<Caret /></Tool>
						<Tool $left $gap={5}><Arrange />排列<Caret /></Tool>
					</SideColumn>
				</Group>

				<Group $w={100} $row $plain>
					<Big $w={88}>
						<Tool><SmartDoc /></Tool>
						<Tool>智能公文</Tool>
					</Big>
				</Group>
			</Ribbon>

			<Workspace>
				<Sidebar>
					<SideTabs>
						<SideTab $on>目录</SideTab>
						<SideTab>章节</SideTab>
						<SideTab>书签</SideTab>
						<ClippedTab $w={42}>查找和替换</ClippedTab>
						<MoreTabs><ChevronRight size={16} strokeWidth={1.6} /></MoreTabs>
						<CloseTab><X size={18} strokeWidth={1.4} /></CloseTab>
					</SideTabs>
					<SideTools>
						<SquareButton><ChevronDown size={17} strokeWidth={1.6} /></SquareButton>
						<SquareButton><ChevronUp size={17} strokeWidth={1.6} /></SquareButton>
						<SquareButton><Plus size={21} strokeWidth={1.6} /></SquareButton>
						<SquareButton><Minus size={21} strokeWidth={1.6} /></SquareButton>
						<AiButton><AiOutline />AI识别目录</AiButton>
					</SideTools>
					<Tree>
						<TreeInner>
							{toc.map(row =>
								row.num ? (
									<TreeRow key={row.num} $sub $bg={row.bg}>
										<TreeNum>{row.num}</TreeNum>{row.title}
									</TreeRow>
								) : (
									<TreeRow key={row.ch ?? 'blank'} $bg={row.bg}>
										{row.open && <TreeArrow />}
										{row.open ? <ChapterPart>{row.ch}</ChapterPart> : row.ch}
										{row.title}
									</TreeRow>
								),
							)}
						</TreeInner>
					</Tree>
					<SideThumb />
				</Sidebar>
				<Gap />
				<Page>
					<Handle><span>H<sub>1</sub></span><DragDots /></Handle>
					<DocTitle>第四章　软件设计</DocTitle>
					<DocHeading><b>4.1</b><span>编程软件介绍</span></DocHeading>
					{paragraphs.map(lines =>
						lines.map((line, i) => (
							<DocLine key={line} $first={i === 0} $end={line.endsWith('服务。')}>{line}</DocLine>
						)),
					)}
				</Page>
				<Gutter>
					<GutterMark $top={9}><TopMark /></GutterMark>
					<GutterMark $top={32}><TriUp /></GutterMark>
					<DocThumb />
					<GutterMark $top={748}><SquareMark /></GutterMark>
					<GutterMark $top={768}><DownDouble /></GutterMark>
				</Gutter>
				<Rail>
					<RailItem><Minus size={20} strokeWidth={1.2} color="#777" /></RailItem>
					<RailItem><Knobs /></RailItem>
					<RailItem><Marker /></RailItem>
					<RailItem><MousePointer2 size={22} strokeWidth={1.2} /></RailItem>
					<RailItem><ImageLeaf /></RailItem>
					<RailItem><StarArrow /></RailItem>
					<RailItem><Shirt size={21} strokeWidth={1.2} /></RailItem>
					<RailItem><CircleHelp size={21} strokeWidth={1.2} /></RailItem>
					<RailItem><TranslateRail /></RailItem>
					<RailItem><Dots3 /></RailItem>
				</Rail>
			</Workspace>

			<StatusBar>
				<Seg $w={95}>页面: 24/39</Seg>
				<VBar $h={20} />
				<Seg $w={113} $pad={15}>字数: 21492</Seg>
				<VBar $h={20} />
				<Seg $w={142} $pad={15}>拼写检查: 关闭 <Caret /></Seg>
				<VBar $h={20} />
				<Seg $w={116} $pad={12}><AiCheck />AI 校对 <Caret /></Seg>
				<VBar $h={20} />
				<Seg $w={140} $pad={18}><Warn />缺失字体</Seg>
				<Spacer />
				<StatusButton $w={36}><Eye size={21} strokeWidth={1.3} /></StatusButton>
				<VBar $h={20} $ml={7} $mr={10} />
				<StatusButton $w={30} $on><PageView /></StatusButton>
				<StatusButton $w={50}><OutlineView /></StatusButton>
				<StatusButton $w={32}><Play size={20} strokeWidth={1.3} /></StatusButton>
				<StatusButton $w={46}><Globe size={20} strokeWidth={1.3} /></StatusButton>
				<StatusButton $w={32}><PenTool size={20} strokeWidth={1.3} /></StatusButton>
				<VBar $h={20} $ml={10} />
				<StatusButton $w={50}><FitPage /></StatusButton>
				<Percent $w={59}>140%</Percent>
				<StatusButton $w={16}><ChevronDown size={13} strokeWidth={1.6} color="#666" /></StatusButton>
				<StatusButton $w={32} $ml={10}><Minus size={20} strokeWidth={1.6} /></StatusButton>
				<Slider><SliderFill $value={54} /><SliderThumb $value={54} /></Slider>
				<StatusButton $w={48}><Plus size={20} strokeWidth={1.4} /></StatusButton>
				<StatusButton $w={34}><Fullscreen /></StatusButton>
			</StatusBar>

			<ImeBar>
				<ImeCell $w={26}><Sogou /></ImeCell>
				<VBar $h={24} $ml={9} $mr={1} />
				<ImeCell $w={40}>中</ImeCell>
				<ImeCell $w={28}>°,</ImeCell>
				<ImeCell $w={40}><Mic size={24} strokeWidth={1.5} /></ImeCell>
				<ImeCell $w={36}><Keyboard /></ImeCell>
				<ImeCell $w={38}><Shirt size={24} strokeWidth={1.6} /><ImeDot /></ImeCell>
				<ImeCell $w={38}><AiMark>Ai</AiMark></ImeCell>
			</ImeBar>
		</Shell>
	);
}
